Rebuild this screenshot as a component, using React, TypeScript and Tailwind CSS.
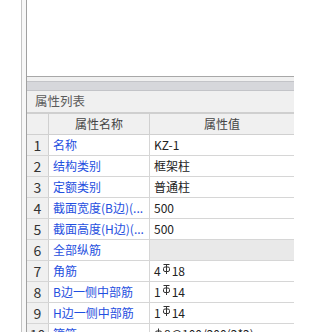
import React from 'react';

// 钢筋符号（三级钢）
function Rebar3() {
  return (
    <svg width="9" height="12" viewBox="0 0 9 12" className="inline-block mx-[1px] -translate-y-[2px]" fill="none" stroke="#333" strokeWidth="1">
      <path d="M1.5 1.5H7.5" />
      <path d="M4.5 1.5V11" />
      <rect x="1.5" y="4" width="6" height="4.5" rx="1.5" />
    </svg>
  );
}

// 钢筋符号（一级钢）
function Rebar1() {
  return (
    <svg width="9" height="11" viewBox="0 0 9 11" className="inline-block mr-[1px] -translate-y-[1px]" fill="none" stroke="#333" strokeWidth="1">
      <path d="M4.5 0.5V10.5" />
      <rect x="1.5" y="3" width="6" height="4.5" rx="1.5" />
    </svg>
  );
}

type Row = { name: string; value: React.ReactNode; group?: boolean };

const rows: Row[] = [
  { name: '名称', value: 'KZ-1' },
  { name: '结构类别', value: '框架柱' },
  { name: '定额类别', value: '普通柱' },
  { name: '截面宽度(B边)(...', value: '500' },
  { name: '截面高度(H边)(...', value: '500' },
  { name: '全部纵筋', value: '', group: true },
  { name: '角筋', value: <>4<Rebar3 />18</> },
  { name: 'B边一侧中部筋', value: <>1<Rebar3 />14</> },
  { name: 'H边一侧中部筋', value: <>1<Rebar3 />14</> },
  { name: '箍筋', value: <><Rebar1 />8@100/200(2*2)</> },
];

export default function App() {
  return (
    <div
      className="w-[294px] h-[332px] overflow-hidden bg-white flex text-[12px] leading-none"
      style={{ fontFamily: '"Microsoft YaHei", "Noto Sans CJK SC", sans-serif' }}
    >
      <div className="w-[21px] shrink-0" />
      <div className="w-[1px] shrink-0 bg-[#c4c4c4]" />
      <div className="w-[4px] shrink-0 bg-[#f7f7f7]" />

      <div className="flex-1 flex flex-col border-l border-[#a0a0a0] min-w-0">
        {/* 上部空白区域 */}
        <div className="h-[77px] shrink-0 bg-white border-b border-[#a8a8a8]" />
        <div className="h-[4px] shrink-0 bg-[#f0f0f0]" />
        <div className="h-[10px] shrink-0 bg-[#d6d7db] border-t border-b border-[#c3c4c8]" />

        {/* 标题 */}
        <div className="h-[21px] shrink-0 bg-[#f0f0f0] flex items-center pl-[8px] text-[#5a5a5a] text-[12.5px]">
          属性列表
        </div>

        {/* 表格 */}
        <div className="border-t-2 border-[#cfcfcf] flex flex-col">
          <div className="h-[21px] flex border-b border-[#d0d0d0] bg-[#f0f0f0] text-[#444]">
            <div className="w-[22px] shrink-0 border-r border-[#d0d0d0]" />
            <div className="w-[101px] shrink-0 border-r border-[#d0d0d0] flex items-center justify-center">属性名称</div>
            <div className="flex-1 flex items-center justify-center">属性值</div>
          </div>
          {rows.map((r, i) => (
            <div key={i} className="h-[21px] shrink-0 flex border-b border-[#d6d6d6]">
              <div className="w-[22px] shrink-0 bg-[#f0f0f0] border-r border-[#d0d0d0] flex items-center justify-center text-[#333] text-[14px]">
                {i + 1}
              </div>
              <div className="w-[101px] shrink-0 border-r border-[#d6d6d6] flex items-center pl-[4px] text-[#1f4fe0] whitespace-nowrap overflow-hidden">
                {r.name}
              </div>
              <div
                className={
                  'flex-1 flex items-center pl-[4px] text-[#222] whitespace-nowrap ' +
                  (r.group ? 'bg-[#e9e9e9]' : 'bg-white')
                }
              >
                {r.value}
              </div>
            </div>
          ))}
        </div>
      </div>
    </div>
  );
}
